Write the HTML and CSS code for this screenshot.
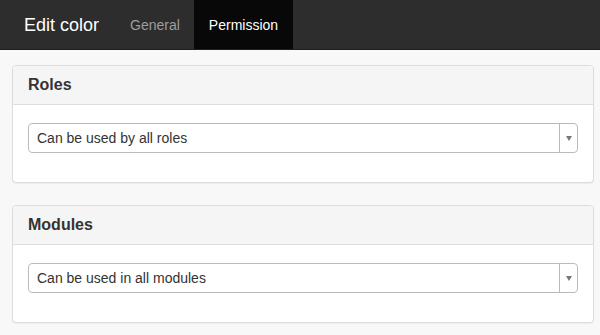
FILE: index.html
```html
<!DOCTYPE html>
<html lang="en">
<head>
    <meta charset="UTF-8">
    <meta name="viewport" content="width=device-width, initial-scale=1.0">
    <title>Edit color</title>
    <link rel="stylesheet" href="styles.css">
</head>
<body>
    <div class="navbar">
        <div class="brand">Edit color</div>
        <div class="nav">
            <div class="nav-item">General</div>
            <div class="nav-item active">Permission</div>
        </div>
    </div>

    <div class="content">
        <!-- Roles -->
        <div class="panel">
            <div class="panel-heading">Roles</div>
            <div class="panel-body">
                <div class="select">
                    <span class="select-text">Can be used by all roles</span>
                    <span class="select-arrow"><b></b></span>
                </div>
            </div>
        </div>

        <!-- Modules -->
        <div class="panel">
            <div class="panel-heading">Modules</div>
            <div class="panel-body">
                <div class="select">
                    <span class="select-text">Can be used in all modules</span>
                    <span class="select-arrow"><b></b></span>
                </div>
            </div>
        </div>
    </div>
</body>
</html>
```

FILE: styles.css
```css
* {
    margin: 0;
    padding: 0;
    box-sizing: border-box;
}

body {
    font-family: 'Liberation Sans', Arial, sans-serif;
    background: #f8f8f8;
    color: #333;
    font-size: 14px;
}

.navbar {
    height: 50px;
    background: #2d2d2d;
    border-bottom: 1px solid #1f1f1f;
    display: flex;
    align-items: stretch;
}

.brand {
    color: #fff;
    font-size: 18px;
    padding: 1px 24px 0;
    display: flex;
    align-items: center;
}

.nav {
    display: flex;
    margin-left: -8px;
}

.nav-item {
    display: flex;
    align-items: center;
    padding: 1px 15px 0;
    color: #9d9d9d;
    font-size: 14px;
}

.nav-item.active {
    background: #080808;
    color: #fff;
    margin-left: -1px;
}

.content {
    padding: 15px 6px 0 12px;
}

.panel {
    background: #fff;
    border: 1px solid #ddd;
    border-radius: 4px;
    margin-bottom: 22px;
    box-shadow: 0 1px 1px rgba(0, 0, 0, 0.05);
}

.panel-heading {
    height: 39px;
    padding: 0 15px;
    background: #f5f5f5;
    border-bottom: 1px solid #ddd;
    border-radius: 3px 3px 0 0;
    font-size: 16px;
    font-weight: bold;
    display: flex;
    align-items: center;
}

.panel-body {
    padding: 18px 15px 29px;
}

.select {
    height: 30px;
    border: 1px solid #bbb;
    border-radius: 4px;
    background: #fff;
    display: flex;
    align-items: stretch;
}

.select-text {
    flex: 1;
    padding-left: 8px;
    display: flex;
    align-items: center;
    color: #333;
}

.select-arrow {
    width: 18px;
    border-left: 1px solid #bbb;
    display: flex;
    align-items: center;
    justify-content: center;
}

.select-arrow b {
    width: 0;
    height: 0;
    border-left: 3px solid transparent;
    border-right: 3px solid transparent;
    border-top: 5px solid #777;
}
```
